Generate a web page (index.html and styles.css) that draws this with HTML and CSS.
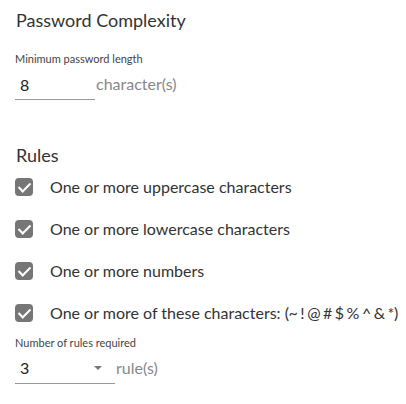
FILE: index.html
```html
<!DOCTYPE html>
<html lang="en">
<head>
  <meta charset="UTF-8" />
  <title>Password Complexity</title>
  <link rel="stylesheet" href="styles.css">
</head>
<body>
  <div class="panel">
    <h2 class="section-title">Password Complexity</h2>
    <div class="field">
      <label class="field-label" for="minLength">Minimum password length</label>
      <div class="field-row">
        <input class="text-input" id="minLength" type="text" value="8" />
        <span class="suffix">character(s)</span>
      </div>
    </div>

    <h2 class="section-title rules-title">Rules</h2>
    <ul class="rules">
      <li class="rule"><span class="check"></span>One or more uppercase characters</li>
      <li class="rule"><span class="check"></span>One or more lowercase characters</li>
      <li class="rule"><span class="check"></span>One or more numbers</li>
      <li class="rule"><span class="check"></span>One or more of these characters:&nbsp;<span class="symbols">(~ ! @ # $ % ^ &amp; *)</span></li>
    </ul>

    <div class="field field-tight">
      <label class="field-label">Number of rules required</label>
      <div class="field-row">
        <div class="select-input">
          <span>3</span>
          <span class="caret"></span>
        </div>
        <span class="suffix">rule(s)</span>
      </div>
    </div>
  </div>
</body>
</html>
```

FILE: styles.css
```css
* { box-sizing: border-box; }

body {
  margin: 0;
  font-family: 'Lato', sans-serif;
  color: #333;
  background: #fff;
}

.panel {
  padding: 9px 0 0 15px;
}

.section-title {
  margin: 0;
  font-size: 18px;
  font-weight: 400;
  line-height: 22px;
  color: #333;
  padding-left: 1px;
}

.field {
  margin-top: 21px;
}

.field-label {
  display: block;
  font-size: 11px;
  line-height: 14px;
  color: #444;
}

.field-row {
  display: flex;
  align-items: flex-end;
  margin-top: 8px;
}

.text-input,
.select-input {
  font-family: 'Lato', sans-serif;
  font-size: 16px;
  line-height: 20px;
  height: 26px;
  padding: 0 5px 5px 5px;
  border: none;
  border-bottom: 1px solid #999;
  color: #222;
  background: transparent;
  outline: none;
}

.text-input {
  width: 80px;
}

.select-input {
  width: 100px;
  display: flex;
  align-items: center;
  justify-content: space-between;
  padding-right: 13px;
}

.caret {
  width: 0;
  height: 0;
  border-left: 4px solid transparent;
  border-right: 4px solid transparent;
  border-top: 4px solid #777;
}

.suffix {
  font-size: 16px;
  line-height: 20px;
  color: #888;
  margin-left: 1px;
  padding-bottom: 6px;
}

.rules-title {
  margin-top: 44px;
}

.rules {
  list-style: none;
  margin: 0;
  padding: 0;
}

.rule {
  display: flex;
  align-items: center;
  height: 42px;
  font-size: 16px;
  line-height: 20px;
  color: #333;
  white-space: nowrap;
}

.symbols {
  letter-spacing: -0.4px;
  word-spacing: -0.8px;
}

.check {
  width: 18px;
  height: 18px;
  margin-right: 17px;
  border-radius: 4px;
  background: #767676;
  position: relative;
  flex-shrink: 0;
}

.check::after {
  content: "";
  position: absolute;
  left: 6px;
  top: 2px;
  width: 5px;
  height: 10px;
  border: solid #fff;
  border-width: 0 2px 2px 0;
  transform: rotate(45deg);
}

.field-tight {
  margin-top: 2px;
}
```
